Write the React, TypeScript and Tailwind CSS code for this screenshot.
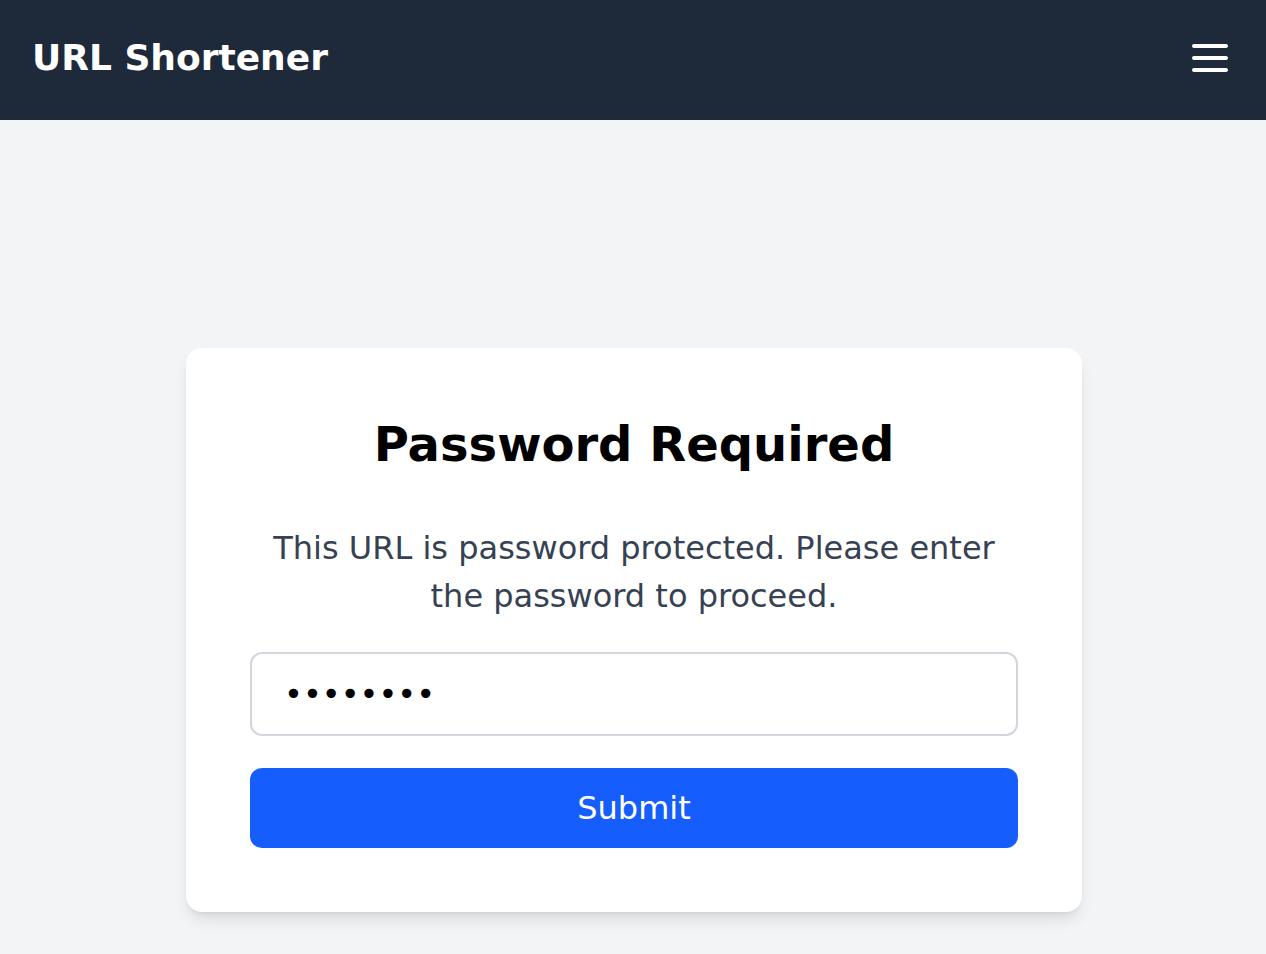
import { useState } from 'react';

function MenuIcon() {
  return (
    <svg viewBox="0 0 24 24" className="size-12" fill="none" stroke="currentColor" strokeWidth={2} strokeLinecap="round">
      <path d="M4 6h16M4 12h16M4 18h16" />
    </svg>
  );
}

export default function App() {
  const [password, setPassword] = useState('password');

  return (
    <div className="min-h-screen bg-gray-100 font-['DejaVu_Sans',sans-serif]">
      <header className="h-[120px] bg-gray-800 flex items-center justify-between pl-8 pr-8">
        <h1 className="text-[36px] leading-[48px] font-bold text-white -mt-1">URL Shortener</h1>
        <button className="text-white -mt-1">
          <MenuIcon />
        </button>
      </header>

      <main className="flex justify-center pt-[228px] pb-10">
        <div className="w-[896px] ml-[2px] bg-white rounded-2xl shadow-lg p-16 flex flex-col items-center">
          <h2 className="text-[48px] leading-[64px] font-bold text-black">Password Required</h2>
          <p className="mt-12 text-[32px] leading-[48px] text-gray-700 text-center px-2">
            This URL is password protected. Please enter the password to proceed.
          </p>
          <form className="w-full mt-8 flex flex-col gap-8" onSubmit={(e) => e.preventDefault()}>
            <input
              type="password"
              value={password}
              onChange={(e) => setPassword(e.target.value)}
              className="w-full h-[84px] border-2 border-gray-300 rounded-xl px-8 text-[32px] text-black outline-none"
            />
            <button type="submit" className="w-full h-20 bg-blue-600 rounded-xl text-white text-[32px]">
              Submit
            </button>
          </form>
        </div>
      </main>
    </div>
  );
}
